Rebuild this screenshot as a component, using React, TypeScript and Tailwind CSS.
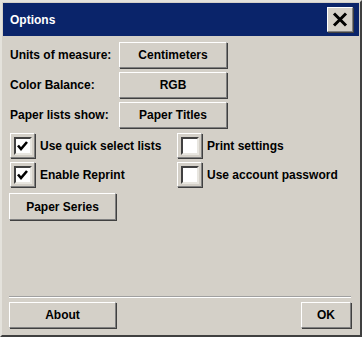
import { useState } from 'react';

const raised =
  'bg-[#d4d0c8] border border-t-white border-l-white border-b-[#808080] border-r-[#808080] shadow-[1px_1px_0_#404040]';

function Btn({ label, className = '' }: { label: string; className?: string }) {
  return (
    <button
      type="button"
      className={`${raised} h-[26px] flex items-center justify-center text-[12px] font-bold text-black ${className}`}
    >
      {label}
    </button>
  );
}

function Check({ label, checked, onToggle }: { label: string; checked: boolean; onToggle: () => void }) {
  return (
    <button type="button" onClick={onToggle} className="flex items-center gap-[5px] text-left">
      <span className={`${raised} w-[25px] h-[25px] flex items-center justify-center`}>
        <span className="w-[18px] h-[18px] bg-white border-2 border-t-[#404040] border-l-[#404040] border-b-[#e8e6e0] border-r-[#e8e6e0] flex items-center justify-center">
          {checked && (
            <svg width="11" height="10" viewBox="0 0 11 10">
              <path d="M1 4.5 L4 8 L10 1" fill="none" stroke="#000" strokeWidth="2.6" />
            </svg>
          )}
        </span>
      </span>
      <span className="text-[12px] font-bold text-black">{label}</span>
    </button>
  );
}

export default function App() {
  const [opts, setOpts] = useState({ quick: true, reprint: true, print: false, password: false });

  function toggle(key: keyof typeof opts) {
    setOpts((prev) => ({ ...prev, [key]: !prev[key] }));
  }

  return (
    <div className="w-[362px] h-[337px] bg-[#d4d0c8] border-2 border-t-[#e4e2dc] border-l-[#e4e2dc] border-b-[#404040] border-r-[#404040] flex flex-col font-['Liberation_Sans',Arial,sans-serif]">
      {/* Title bar */}
      <div className="mx-px mt-px h-[33px] bg-[#0a246a] flex items-center justify-between pl-[7px] pr-[6px]">
        <span className="text-white text-[12px] font-bold">Options</span>
        <button type="button" className={`${raised} w-[26px] h-[25px] flex items-center justify-center`}>
          <svg width="16" height="15" viewBox="0 0 16 15">
            <path d="M2 1.5 L14 13.5 M14 1.5 L2 13.5" stroke="#000" strokeWidth="3" />
          </svg>
        </button>
      </div>

      <div className="flex-1 flex flex-col px-[7px] pt-[6px] pb-[7px]">
        <div className="grid grid-cols-[110px_108px] gap-y-[4px] items-center text-[12px] font-bold text-black">
          <span className="pl-px">Units of measure:</span>
          <Btn label="Centimeters" />
          <span className="pl-px">Color Balance:</span>
          <Btn label="RGB" />
          <span className="pl-px">Paper lists show:</span>
          <Btn label="Paper Titles" />
        </div>

        <div className="grid grid-cols-[167px_1fr] gap-y-[4px] mt-[5px] pl-px">
          <Check label="Use quick select lists" checked={opts.quick} onToggle={() => toggle('quick')} />
          <Check label="Print settings" checked={opts.print} onToggle={() => toggle('print')} />
          <Check label="Enable Reprint" checked={opts.reprint} onToggle={() => toggle('reprint')} />
          <Check label="Use account password" checked={opts.password} onToggle={() => toggle('password')} />
        </div>

        <Btn label="Paper Series" className="w-[107px] h-[27px] mt-[6px]" />

        <div className="flex-1" />

        <div className="border-t border-t-[#a0a0a0] border-b border-b-white mr-[2px]" />

        <div className="flex justify-between mt-[4px] mr-[2px]">
          <Btn label="About" className="w-[107px]" />
          <Btn label="OK" className="w-[50px]" />
        </div>
      </div>
    </div>
  );
}
